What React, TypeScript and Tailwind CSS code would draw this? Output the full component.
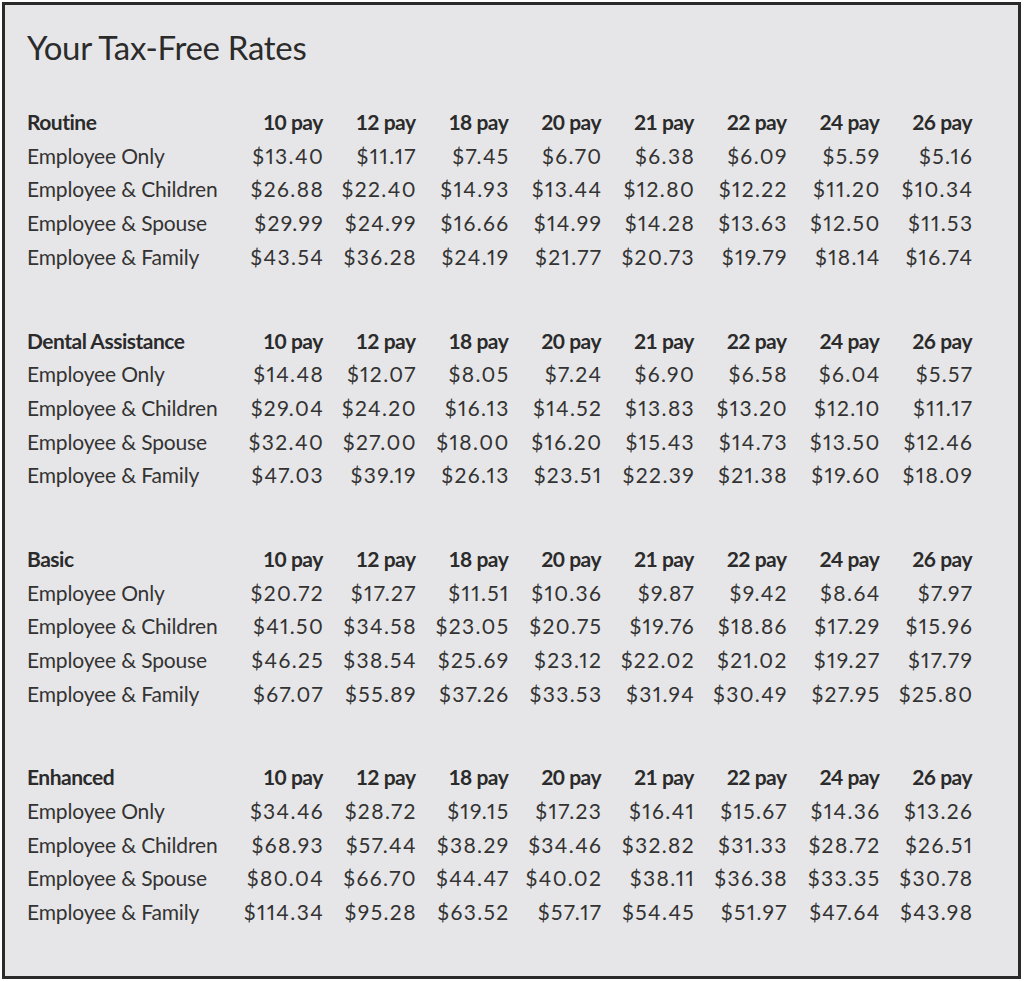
import React from "react";

const pays = ["10 pay", "12 pay", "18 pay", "20 pay", "21 pay", "22 pay", "24 pay", "26 pay"];

const sections: { name: string; rows: [string, string[]][] }[] = [
  {
    name: "Routine",
    rows: [
      ["Employee Only", ["$13.40", "$11.17", "$7.45", "$6.70", "$6.38", "$6.09", "$5.59", "$5.16"]],
      ["Employee & Children", ["$26.88", "$22.40", "$14.93", "$13.44", "$12.80", "$12.22", "$11.20", "$10.34"]],
      ["Employee & Spouse", ["$29.99", "$24.99", "$16.66", "$14.99", "$14.28", "$13.63", "$12.50", "$11.53"]],
      ["Employee & Family", ["$43.54", "$36.28", "$24.19", "$21.77", "$20.73", "$19.79", "$18.14", "$16.74"]],
    ],
  },
  {
    name: "Dental Assistance",
    rows: [
      ["Employee Only", ["$14.48", "$12.07", "$8.05", "$7.24", "$6.90", "$6.58", "$6.04", "$5.57"]],
      ["Employee & Children", ["$29.04", "$24.20", "$16.13", "$14.52", "$13.83", "$13.20", "$12.10", "$11.17"]],
      ["Employee & Spouse", ["$32.40", "$27.00", "$18.00", "$16.20", "$15.43", "$14.73", "$13.50", "$12.46"]],
      ["Employee & Family", ["$47.03", "$39.19", "$26.13", "$23.51", "$22.39", "$21.38", "$19.60", "$18.09"]],
    ],
  },
  {
    name: "Basic",
    rows: [
      ["Employee Only", ["$20.72", "$17.27", "$11.51", "$10.36", "$9.87", "$9.42", "$8.64", "$7.97"]],
      ["Employee & Children", ["$41.50", "$34.58", "$23.05", "$20.75", "$19.76", "$18.86", "$17.29", "$15.96"]],
      ["Employee & Spouse", ["$46.25", "$38.54", "$25.69", "$23.12", "$22.02", "$21.02", "$19.27", "$17.79"]],
      ["Employee & Family", ["$67.07", "$55.89", "$37.26", "$33.53", "$31.94", "$30.49", "$27.95", "$25.80"]],
    ],
  },
  {
    name: "Enhanced",
    rows: [
      ["Employee Only", ["$34.46", "$28.72", "$19.15", "$17.23", "$16.41", "$15.67", "$14.36", "$13.26"]],
      ["Employee & Children", ["$68.93", "$57.44", "$38.29", "$34.46", "$32.82", "$31.33", "$28.72", "$26.51"]],
      ["Employee & Spouse", ["$80.04", "$66.70", "$44.47", "$40.02", "$38.11", "$36.38", "$33.35", "$30.78"]],
      ["Employee & Family", ["$114.34", "$95.28", "$63.52", "$57.17", "$54.45", "$51.97", "$47.64", "$43.98"]],
    ],
  },
];

export default function App() {
  return (
    <main className="w-[1024px] h-[981px] bg-white pt-[2px] pl-[2px] pr-[3px] pb-[2px] font-['Lato',sans-serif] text-[#2b2b2b]">
      <div className="h-full border-[3px] border-[#2a2a2a] bg-[#e6e6e8] pl-[22px] pt-[22px]">
        <h1 className="text-[33px] leading-[40px] font-normal tracking-[-0.3px]">Your Tax-Free Rates</h1>

        <div className="mt-[38px] flex flex-col gap-[50px]">
          {sections.map((s) => (
            <div key={s.name}>
              <div className="grid grid-cols-[203px_repeat(8,92.75px)] h-[33.7px] items-center text-[21px] font-bold tracking-[-0.5px]">
                <span>{s.name}</span>
                {pays.map((p) => (
                  <span key={p} className="text-right">{p}</span>
                ))}
              </div>
              {s.rows.map(([label, vals]) => (
                <div key={label} className="grid grid-cols-[203px_repeat(8,92.75px)] h-[33.7px] items-center text-[21px] text-[#333]">
                  <span className="tracking-[-0.15px]">{label}</span>
                  {vals.map((v, i) => (
                    <span key={i} className="text-right proportional-nums tracking-[1.4px] -mr-[1.4px]">{v}</span>
                  ))}
                </div>
              ))}
            </div>
          ))}
        </div>
      </div>
    </main>
  );
}
